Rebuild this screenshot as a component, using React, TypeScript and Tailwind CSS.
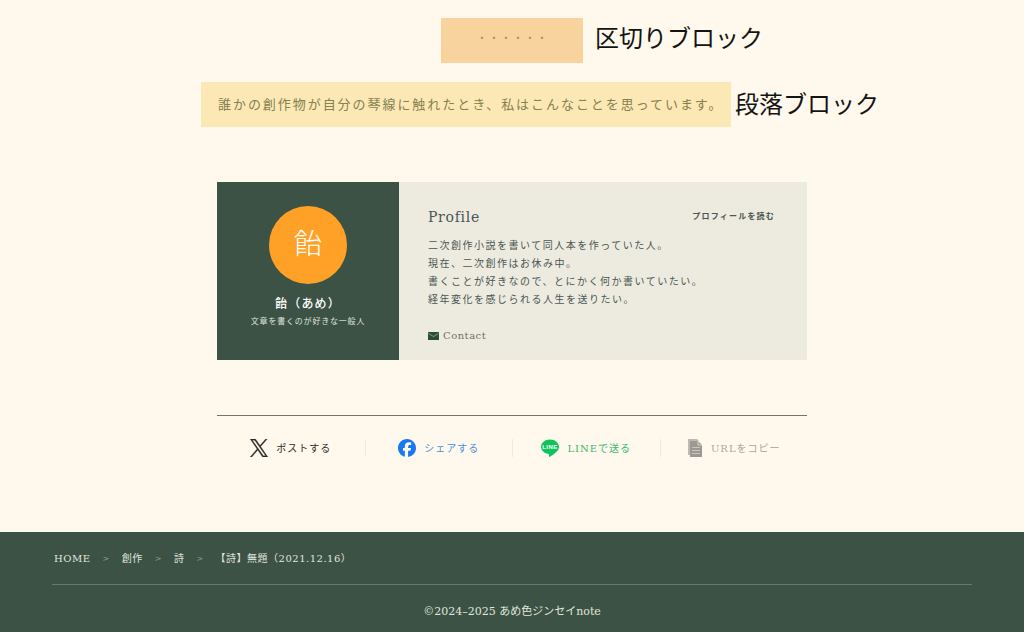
import type { ReactNode } from 'react';
import { FaFacebook } from 'react-icons/fa6';

interface ShareItemProps {
  icon: ReactNode;
  label: string;
  color: string;
}

interface Crumb {
  label: string;
  href: string;
}

const bio = [
  '二次創作小説を書いて同人本を作っていた人。',
  '現在、二次創作はお休み中。',
  '書くことが好きなので、とにかく何か書いていたい。',
  '経年変化を感じられる人生を送りたい。',
];

const crumbs: Crumb[] = [
  { label: 'HOME', href: '#home' },
  { label: '創作', href: '#creation' },
  { label: '詩', href: '#poem' },
];

function XIcon() {
  return (
    <svg className="size-[18px]" viewBox="0 0 1200 1227" fill="currentColor" stroke="currentColor" strokeWidth="24" aria-hidden="true">
      <path d="M714.163 519.284L1160.89 0H1055.03L667.137 450.887L357.328 0H0L468.492 681.821L0 1226.370H105.866L515.491 750.218L842.672 1226.370H1200L714.137 519.284H714.163ZM569.165 687.828L521.697 619.934L144.011 79.694H306.615L611.412 515.685L658.880 583.579L1055.080 1150.300H892.476L569.165 687.854V687.828Z" />
    </svg>
  );
}

function LineIcon() {
  return (
    <svg className="size-[18px]" viewBox="0 0 36 36" aria-hidden="true">
      <path
        fill="#0fc35b"
        d="M18 1C8 1 0 7.500 0 15.500c0 7 6 12.800 14 14.200 1.500.3 2 .8 2 2.300v2.800c0 1 .8 1.400 1.700.8C22 33 27.500 29.500 31.500 25.200 34.500 22.200 36 19 36 15.500 36 7.500 28 1 18 1z"
      />
      <text
        x="18"
        y="20"
        fill="#fff"
        textAnchor="middle"
        fontSize="12"
        fontWeight="700"
        fontFamily="Liberation Sans, sans-serif"
      >
        LINE
      </text>
    </svg>
  );
}

function CopyIcon() {
  return (
    <svg className="h-[18px] w-4" viewBox="0 0 16 18" aria-hidden="true">
      <path d="M1 0h9l2 2H3v14H1z" fill="#bdbab4" />
      <path d="M3 2h8l4 4v12H3z" fill="#9b9994" />
      <path d="M11 2v4h4" fill="none" stroke="#d8d4cb" strokeWidth="1" />
      <path d="M5 8.500h8M5 11.500h8M5 14.500h8" stroke="#c9c6bf" strokeWidth="1" />
    </svg>
  );
}

function MailIcon() {
  return (
    <svg className="h-2 w-[11px]" viewBox="0 0 11 8" aria-hidden="true">
      <rect width="11" height="8" rx="0.5" fill="#2c4c39" />
      <path d="M0.500 1.500l5 3 5-3" fill="none" stroke="#9fb0a0" strokeWidth="0.8" />
    </svg>
  );
}

function ShareItem({ icon, label, color }: ShareItemProps) {
  return (
    <li className="flex h-[18px] items-center justify-center border-l border-[#f0e9df] first:border-l-0">
      <button type="button" className={'flex items-center gap-2 text-[10px] leading-4 tracking-widest ' + color}>
        {icon}
        <span className="pt-0.5">{label}</span>
      </button>
    </li>
  );
}

function ProfileCard() {
  return (
    <section className="flex bg-[#edebdf]">
      <div className="flex w-[182px] shrink-0 flex-col items-center bg-[#3c5244] pt-6 text-white">
        <div className="flex size-[78px] items-center justify-center rounded-full bg-[#ffa126] text-[28px] font-light">
          飴
        </div>
        <p className="mt-3 text-[12px] leading-4 font-medium tracking-widest">飴（あめ）</p>
        <p className="mt-1 text-[8px] leading-3 tracking-widest text-[#dfe4dc]">文章を書くのが好きな一般人</p>
      </div>
      <div className="min-w-0 flex-1 pt-6 pr-8 pb-4 pl-[29px] text-[#4a5554]">
        <div className="flex items-start justify-between">
          <h2 className="text-[14px] leading-[22px] tracking-wider">Profile</h2>
          <a href="#profile" className="text-[8px] leading-5 font-bold tracking-[0.15em]">プロフィールを読む</a>
        </div>
        <div className="mt-[9px] text-[10px] leading-[18px] tracking-[0.15em]">
          {bio.map((line) => (
            <p key={line}>{line}</p>
          ))}
        </div>
        <a href="#contact" className="mt-[19px] flex items-center gap-1 text-[10px] leading-4 tracking-wider text-[#6b716c]">
          <MailIcon />
          Contact
        </a>
      </div>
    </section>
  );
}

export default function App() {
  return (
    <div className="flex min-h-screen flex-col overflow-x-hidden bg-[#fff8ed] font-['DejaVu_Serif','Noto_Sans_CJK_JP',sans-serif]" lang="ja">
      <main className="flex-1 pt-[18px]">
        <div className="grid grid-cols-[1fr_142px_1fr] items-start">
          <div className="col-start-2 flex h-[45px] items-center justify-center bg-[#f8d39e] pb-1 text-[12px] leading-4 font-light text-[#a8906e]">
            ・・・・・・
          </div>
          <p className="pl-3 text-[24px] leading-[42px] text-[#151412]">区切りブロック</p>
        </div>

        <div className="mx-auto mt-[19px] flex w-[622px] items-center whitespace-nowrap">
          <p className="flex h-[45px] w-[530px] shrink-0 items-center bg-[#fce8b5] pl-[17px] text-[13px] tracking-[0.15em] text-[#85804f]">
            誰かの創作物が自分の琴線に触れたとき、私はこんなことを思っています。
          </p>
          <p className="pl-1 text-[24px] leading-[42px] text-[#151412]">段落ブロック</p>
        </div>

        <div className="mx-auto mt-[55px] max-w-[590px]">
          <ProfileCard />
          <ul className="mt-[55px] grid grid-cols-4 border-t border-[#77736d] pt-[23px] pb-[75px]">
            <ShareItem icon={<XIcon />} label="ポストする" color="text-[#2b2b28]" />
            <ShareItem icon={<FaFacebook className="size-[18px] text-[#1877f2]" />} label="シェアする" color="text-[#4a90d9]" />
            <ShareItem icon={<LineIcon />} label="LINEで送る" color="text-[#38bb6b]" />
            <ShareItem icon={<CopyIcon />} label="URLをコピー" color="text-[#aaa7a0]" />
          </ul>
        </div>
      </main>

      <footer className="bg-[#3c5244] px-[52px] text-[#e0e6de]">
        <nav aria-label="パンくずリスト" className="border-b border-[#66796c] pt-[18px] pb-4">
          <ol className="flex items-center pl-0.5 text-[10px] leading-[18px] tracking-wider">
            {crumbs.map((crumb) => (
              <li key={crumb.label} className="flex items-center">
                <a href={crumb.href}>{crumb.label}</a>
                <span className="px-3 text-[8px] text-[#8d9c91]">&gt;</span>
              </li>
            ))}
            <li>【詩】無題（2021.12.16）</li>
          </ol>
        </nav>
        <p className="pt-[18px] pb-3 text-center text-[11px] leading-[18px]">©2024–2025 あめ色ジンセイnote</p>
      </footer>
    </div>
  );
}
